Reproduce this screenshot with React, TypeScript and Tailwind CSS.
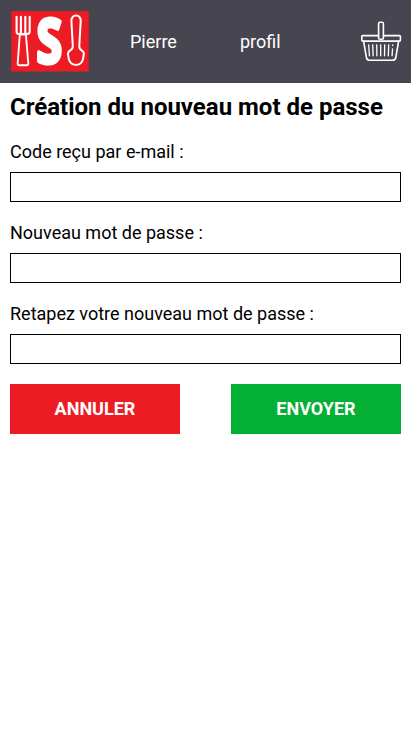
import React from "react";

function Logo() {
  return (
    <svg width="78" height="61" viewBox="11 11 78 61" className="block overflow-visible" aria-label="Logo">
      <rect x="11.3" y="11.2" width="77.5" height="60.3" fill="#ed1c24" />
      <g fill="none" stroke="#fff" strokeLinecap="round" strokeLinejoin="round">
        <path d="M16.6 16.7V31.5Q16.6 34 19 34H27Q29.7 34 29.7 31.5V16.7M20.9 16.7V33M25.3 16.7V33" strokeWidth="2.1" />
        <path d="M19.8 34.5H25.9L28.3 63.5Q28.4 65.2 26.8 65.2H19.2Q17.6 65.2 17.7 63.5Z" strokeWidth="1.9" />
        <path d="M76.1 15.6C79.2 15.6 80.8 18 80.7 21L79.3 46C79.2 48.4 80 49.4 81.6 50.4C83.3 51.4 84.1 52.8 83.8 54.5C83.3 61 80.5 65.1 76 65.1C71.4 65.1 68.5 61 68 54.5C67.8 52.8 68.6 51.4 70.3 50.4C72 49.4 72.9 48.4 72.8 46L71.4 21C71.3 18 73 15.6 76.1 15.6Z" strokeWidth="2" />
      </g>
      <text
        transform="translate(49.3 62.9) scale(0.76 1)"
        textAnchor="middle"
        fontFamily="'Open Sans', sans-serif"
        fontWeight="700"
        fontSize="61"
        fill="#fff"
        stroke="#fff"
        strokeWidth="4.2"
        strokeLinejoin="round"
      >
        S
      </text>
    </svg>
  );
}

function Basket() {
  return (
    <svg width="42" height="41" viewBox="360 21 42 41" className="block" fill="none" stroke="#fff" strokeWidth="1.6" strokeLinecap="round" strokeLinejoin="round">
      <path d="M378.6 35.6H362.8Q361.8 35.6 361.8 36.6V40Q361.8 41.1 362.9 41.1H399.3Q400.4 41.1 400.4 40V36.6Q400.4 35.6 399.4 35.6H383.6" />
      <rect x="378.6" y="22.2" width="4.8" height="17" rx="1.3" />
      <path d="M363.6 41.3L366.4 57.5Q366.9 60.2 369.5 60.2H392.6Q395.3 60.2 395.8 57.5L398.6 41.3" />
      <path d="M368.7 44.8L369.4 55.8M372.7 44.8L373.1 55.8M376.7 44.8L376.9 55.8M380.7 44.8V55.8M384.7 44.8L384.5 55.8M388.7 44.8L388.3 55.8M392.7 44.8V45.6M392.5 48.8L392.1 55.8" strokeWidth="1.3" />
    </svg>
  );
}

function Field({ label }: { label: string }) {
  return (
    <label className="mb-5 block">
      <span className="mb-2.5 block leading-[21px]">{label}</span>
      <input className="block h-[30px] w-full border border-black bg-white px-2 outline-none" />
    </label>
  );
}

export default function App() {
  return (
    <div className="min-h-screen bg-white font-['Roboto',sans-serif] text-lg text-black">
      <header className="flex h-[83px] items-center bg-[#474550] pl-[11px] pr-[9px] text-white">
        <Logo />
        <nav className="ml-[41px] flex flex-1 leading-[21px]">
          <a className="w-[110px]">Pierre</a>
          <a>profil</a>
        </nav>
        <Basket />
      </header>
      <main className="px-2.5 pt-2.5">
        <h1 className="mb-5 whitespace-nowrap text-2xl font-bold leading-7">Création du nouveau mot de passe</h1>
        <form>
          <Field label="Code reçu par e-mail :" />
          <Field label="Nouveau mot de passe :" />
          <Field label="Retapez votre nouveau mot de passe :" />
          <div className="flex justify-between">
            <button type="button" className="h-[50px] w-[170px] bg-[#ed1c24] font-bold text-white">ANNULER</button>
            <button type="button" className="h-[50px] w-[170px] bg-[#04af35] font-bold text-white">ENVOYER</button>
          </div>
        </form>
      </main>
    </div>
  );
}
